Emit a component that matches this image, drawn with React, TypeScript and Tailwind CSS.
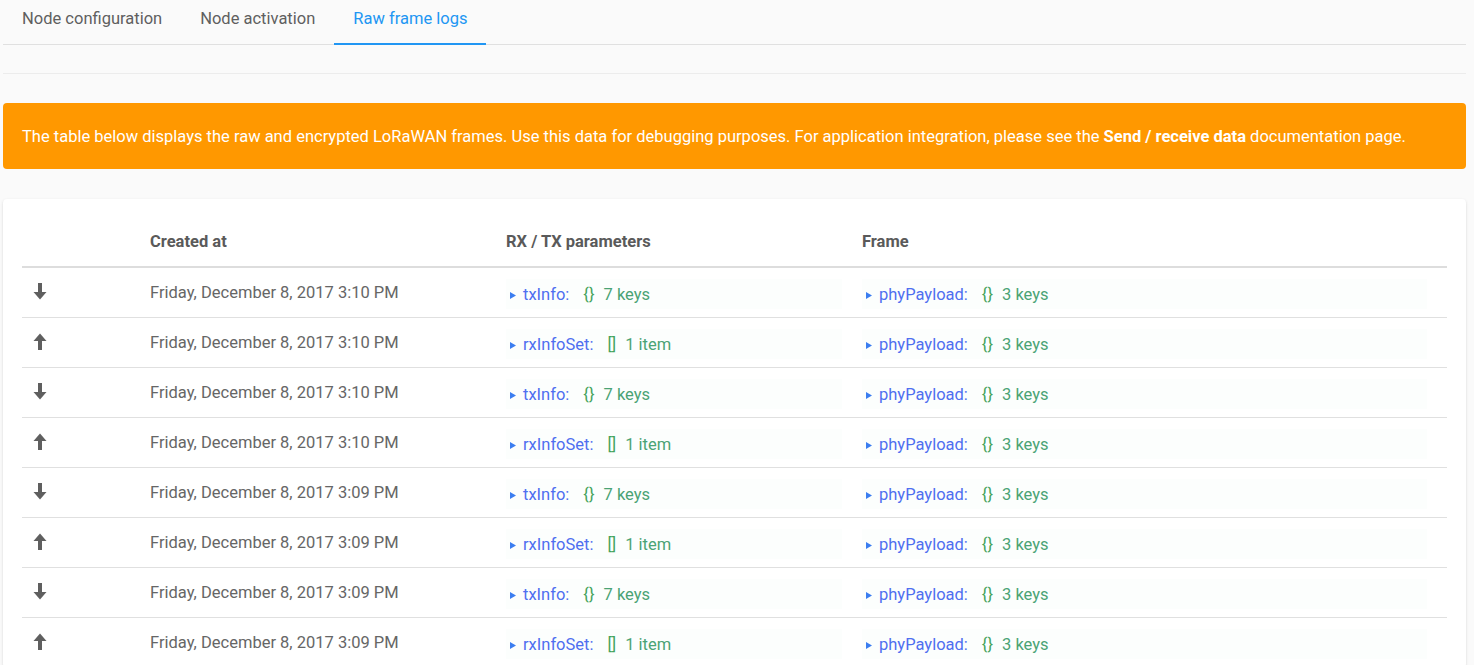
import React from "react";

type Row = { dir: "down" | "up"; time: string; key: string; kind: "obj" | "arr"; count: string };

const rows: Row[] = [
  { dir: "down", time: "Friday, December 8, 2017 3:10 PM", key: "txInfo", kind: "obj", count: "7 keys" },
  { dir: "up", time: "Friday, December 8, 2017 3:10 PM", key: "rxInfoSet", kind: "arr", count: "1 item" },
  { dir: "down", time: "Friday, December 8, 2017 3:10 PM", key: "txInfo", kind: "obj", count: "7 keys" },
  { dir: "up", time: "Friday, December 8, 2017 3:10 PM", key: "rxInfoSet", kind: "arr", count: "1 item" },
  { dir: "down", time: "Friday, December 8, 2017 3:09 PM", key: "txInfo", kind: "obj", count: "7 keys" },
  { dir: "up", time: "Friday, December 8, 2017 3:09 PM", key: "rxInfoSet", kind: "arr", count: "1 item" },
  { dir: "down", time: "Friday, December 8, 2017 3:09 PM", key: "txInfo", kind: "obj", count: "7 keys" },
  { dir: "up", time: "Friday, December 8, 2017 3:09 PM", key: "rxInfoSet", kind: "arr", count: "1 item" },
];

function Arrow({ dir }: { dir: "down" | "up" }) {
  return (
    <svg width="14" height="17" viewBox="0 0 14 17" className={dir === "up" ? "rotate-180" : ""}>
      <rect x="5" y="0" width="4" height="10" fill="#5f5f5f" />
      <polygon points="0.5,9 13.5,9 7,16.5" fill="#5f5f5f" />
    </svg>
  );
}

function Json({ k, kind, count }: { k: string; kind: "obj" | "arr"; count: string }) {
  return (
    <div className="flex items-center h-[30px] bg-[#fcfefd] pl-[4px] pt-[4px] text-[16.5px]">
      <svg width="6" height="7" viewBox="0 0 6 7" className="mr-[7px]">
        <polygon points="0,0 6,3.5 0,7" fill="#3b7df0" />
      </svg>
      <span className="text-[#4f6ff0]">{k}:</span>
      <span className="ml-[14px] text-[#45a35b]">{kind === "obj" ? "{}" : "[]"}</span>
      <span className="ml-[9px] text-[#4aa374]">{count}</span>
    </div>
  );
}

export default function App() {
  return (
    <div
      className="min-h-[665px] bg-[#fafafa] pl-[3px] pr-[8px] text-[#616161]"
      style={{ fontFamily: "Roboto, 'Liberation Sans', sans-serif" }}
    >
      <div className="flex h-[45px] border-b border-[#e0e0e0] text-[16.5px]">
        <div className="px-[19px] flex items-center h-[44px] pb-[5px] text-[#5f5f5f]">Node configuration</div>
        <div className="px-[19px] flex items-center h-[44px] pb-[5px] text-[#5f5f5f]">Node activation</div>
        <div className="px-[19px] flex items-center pb-[4px] text-[#2196f3] border-b-2 border-[#2196f3] h-[45px]">
          Raw frame logs
        </div>
      </div>
      <div className="h-[29px] border-b border-[#ececec]" />
      <div className="mt-[29px] h-[66px] rounded-[4px] bg-[#ff9800] flex items-center pt-[2px] px-[19px] text-white text-[16.5px]">
        <span>
          The table below displays the raw and encrypted LoRaWAN frames. Use this data for debugging purposes. For application integration, please see the{" "}
          <b className="font-bold">Send / receive data</b> documentation page.
        </span>
      </div>
      <div className="mt-[30px] bg-white rounded-[4px] shadow-[0_1px_3px_rgba(0,0,0,0.12),0_1px_1px_rgba(0,0,0,0.08)] px-[19px] pt-[19px]">
        <div className="grid grid-cols-[128px_356px_356px_1fr] h-[50px] items-center border-b-2 border-[#dddddd] text-[16.5px] font-bold text-[#5a5a5a]">
          <div />
          <div>Created at</div>
          <div>RX / TX parameters</div>
          <div>Frame</div>
        </div>
        {rows.map((r, i) => (
          <div
            key={i}
            className="grid grid-cols-[128px_356px_356px_1fr] h-[50px] pt-[2px] items-center border-b border-[#e0e0e0] text-[16.5px]"
          >
            <div className="pl-[11px] -mt-[4px] flex items-center">
              <Arrow dir={r.dir} />
            </div>
            <div className="text-[#666666]">{r.time}</div>
            <div className="pr-[20px]">
              <Json k={r.key} kind={r.kind} count={r.count} />
            </div>
            <div className="pr-[20px]">
              <Json k="phyPayload" kind="obj" count="3 keys" />
            </div>
          </div>
        ))}
      </div>
    </div>
  );
}
